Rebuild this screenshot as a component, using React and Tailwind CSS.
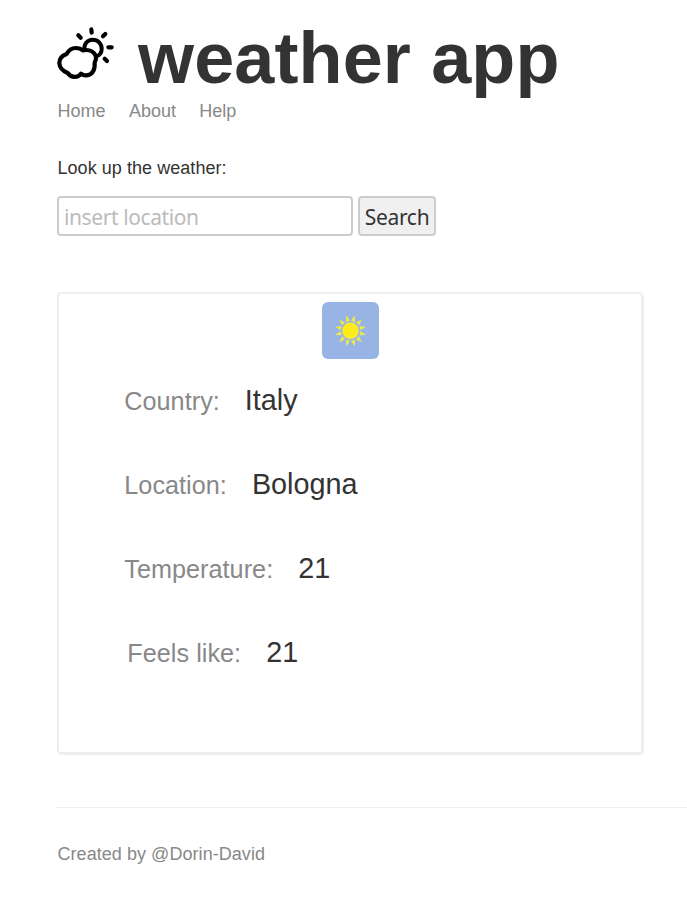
const rows = [
  { label: 'Country:', value: 'Italy' },
  { label: 'Location:', value: 'Bologna' },
  { label: 'Temperature:', value: '21' },
  { label: 'Feels like:', value: '21', indent: true },
];

const rays = [15, 45, 75, 105, 135, 165, 195, 225, 255, 285, 315, 345];

function CloudSun() {
  return (
    <svg className="block h-[65px] w-[75px]" viewBox="0 0 225 195" fill="none" stroke="#000" strokeLinecap="round" strokeLinejoin="round">
      <path strokeWidth="12" d="M103 88C102 72 112 59 128 59C144 59 155 71 155 86C155 96 151 104 142 108" />
      <path strokeWidth="12.5" d="M50 102C56 91 65 84 77 84C86 84 93 86 98 91C115 88 130 93 137 107C139 114 138 121 134 127C136 151 126 165 110 166C103 167 98 165 93 161C85 174 63 174 53 159C37 152 29 143 28 130C28 115 37 106 50 102Z" />
      <path strokeWidth="12.5" d="M124 28L125 38M85 46L92 53M166 42L159 49M175 82L185 82M164 116L171 123" />
    </svg>
  );
}

function Sun() {
  return (
    <svg className="block h-[57px] w-[57px] rounded-md bg-[#98b4e4]" viewBox="0 0 57 57">
      <g fill="#eee84c">
        {rays.map((a) => (
          <path key={a} transform={`rotate(${a} 28.5 28.8)`} d="M28.2 13.4L28.8 13.4L30.6 19L26.4 19Z" />
        ))}
      </g>
      <circle cx="28.5" cy="28.8" r="8.2" fill="#ffec1a" stroke="#d5d979" strokeWidth=".7" />
    </svg>
  );
}

export default function App() {
  return (
    <div className="h-[901px] overflow-hidden bg-white pl-[57px] pt-5 font-['Liberation_Sans',Arial,sans-serif] text-[18px] text-[#333]">
      <header>
        <div className="-ml-[7px] flex h-[80px] items-start">
          <CloudSun />
          <h1 className="ml-[13px] whitespace-nowrap text-[72px] font-bold leading-[76px] tracking-[0.13px]">weather app</h1>
        </div>
        <nav className="flex h-[22px] gap-[23.4px] pl-[0.5px] leading-[22px] text-[#888]">
          <a>Home</a>
          <a>About</a>
          <a>Help</a>
        </nav>
      </header>

      <form className="mt-[35px]" onSubmit={(e) => e.preventDefault()}>
        <label className="block h-[22px] pl-[0.5px] leading-[22px] tracking-[0.05px]" htmlFor="location">Look up the weather:</label>
        <div className="mt-[17px] flex gap-[5px] font-['Noto_Sans',sans-serif] text-[21px]">
          <input
            id="location"
            className="h-10 w-[296px] rounded border-2 border-[#ccc] px-[5px] pt-0.5 tracking-[-0.4px] outline-none placeholder:text-[#bbb]"
            placeholder="insert location"
          />
          <button className="h-10 w-[78px] whitespace-nowrap rounded border-2 border-[#ccc] bg-[#f0f0f0] pt-[3px] tracking-[-0.3px]">Search</button>
        </div>
      </form>

      <section className="mt-14 h-[462px] w-[586px] rounded border-2 border-[#eee] shadow-[1px_1px_1px_#eee]">
        <div className="flex justify-center pt-2"><Sun /></div>
        <dl>
          {rows.map((row) => (
            <div key={row.label} className={`flex h-[84px] items-baseline gap-[25px] pt-6 leading-[34px] ${row.indent ? 'pl-[68.3px]' : 'pl-[65.3px]'}`}>
              <dt className="text-[25.2px] tracking-[0.04px] text-[#888]">{row.label}</dt>
              <dd className="text-[28.8px]">{row.value}</dd>
            </div>
          ))}
        </dl>
      </section>

      <footer className="mt-[53px] border-t border-[#eee] pl-[0.5px] pt-[35px] leading-[22px] tracking-[0.05px] text-[#888]">Created by @Dorin-David</footer>
    </div>
  );
}
